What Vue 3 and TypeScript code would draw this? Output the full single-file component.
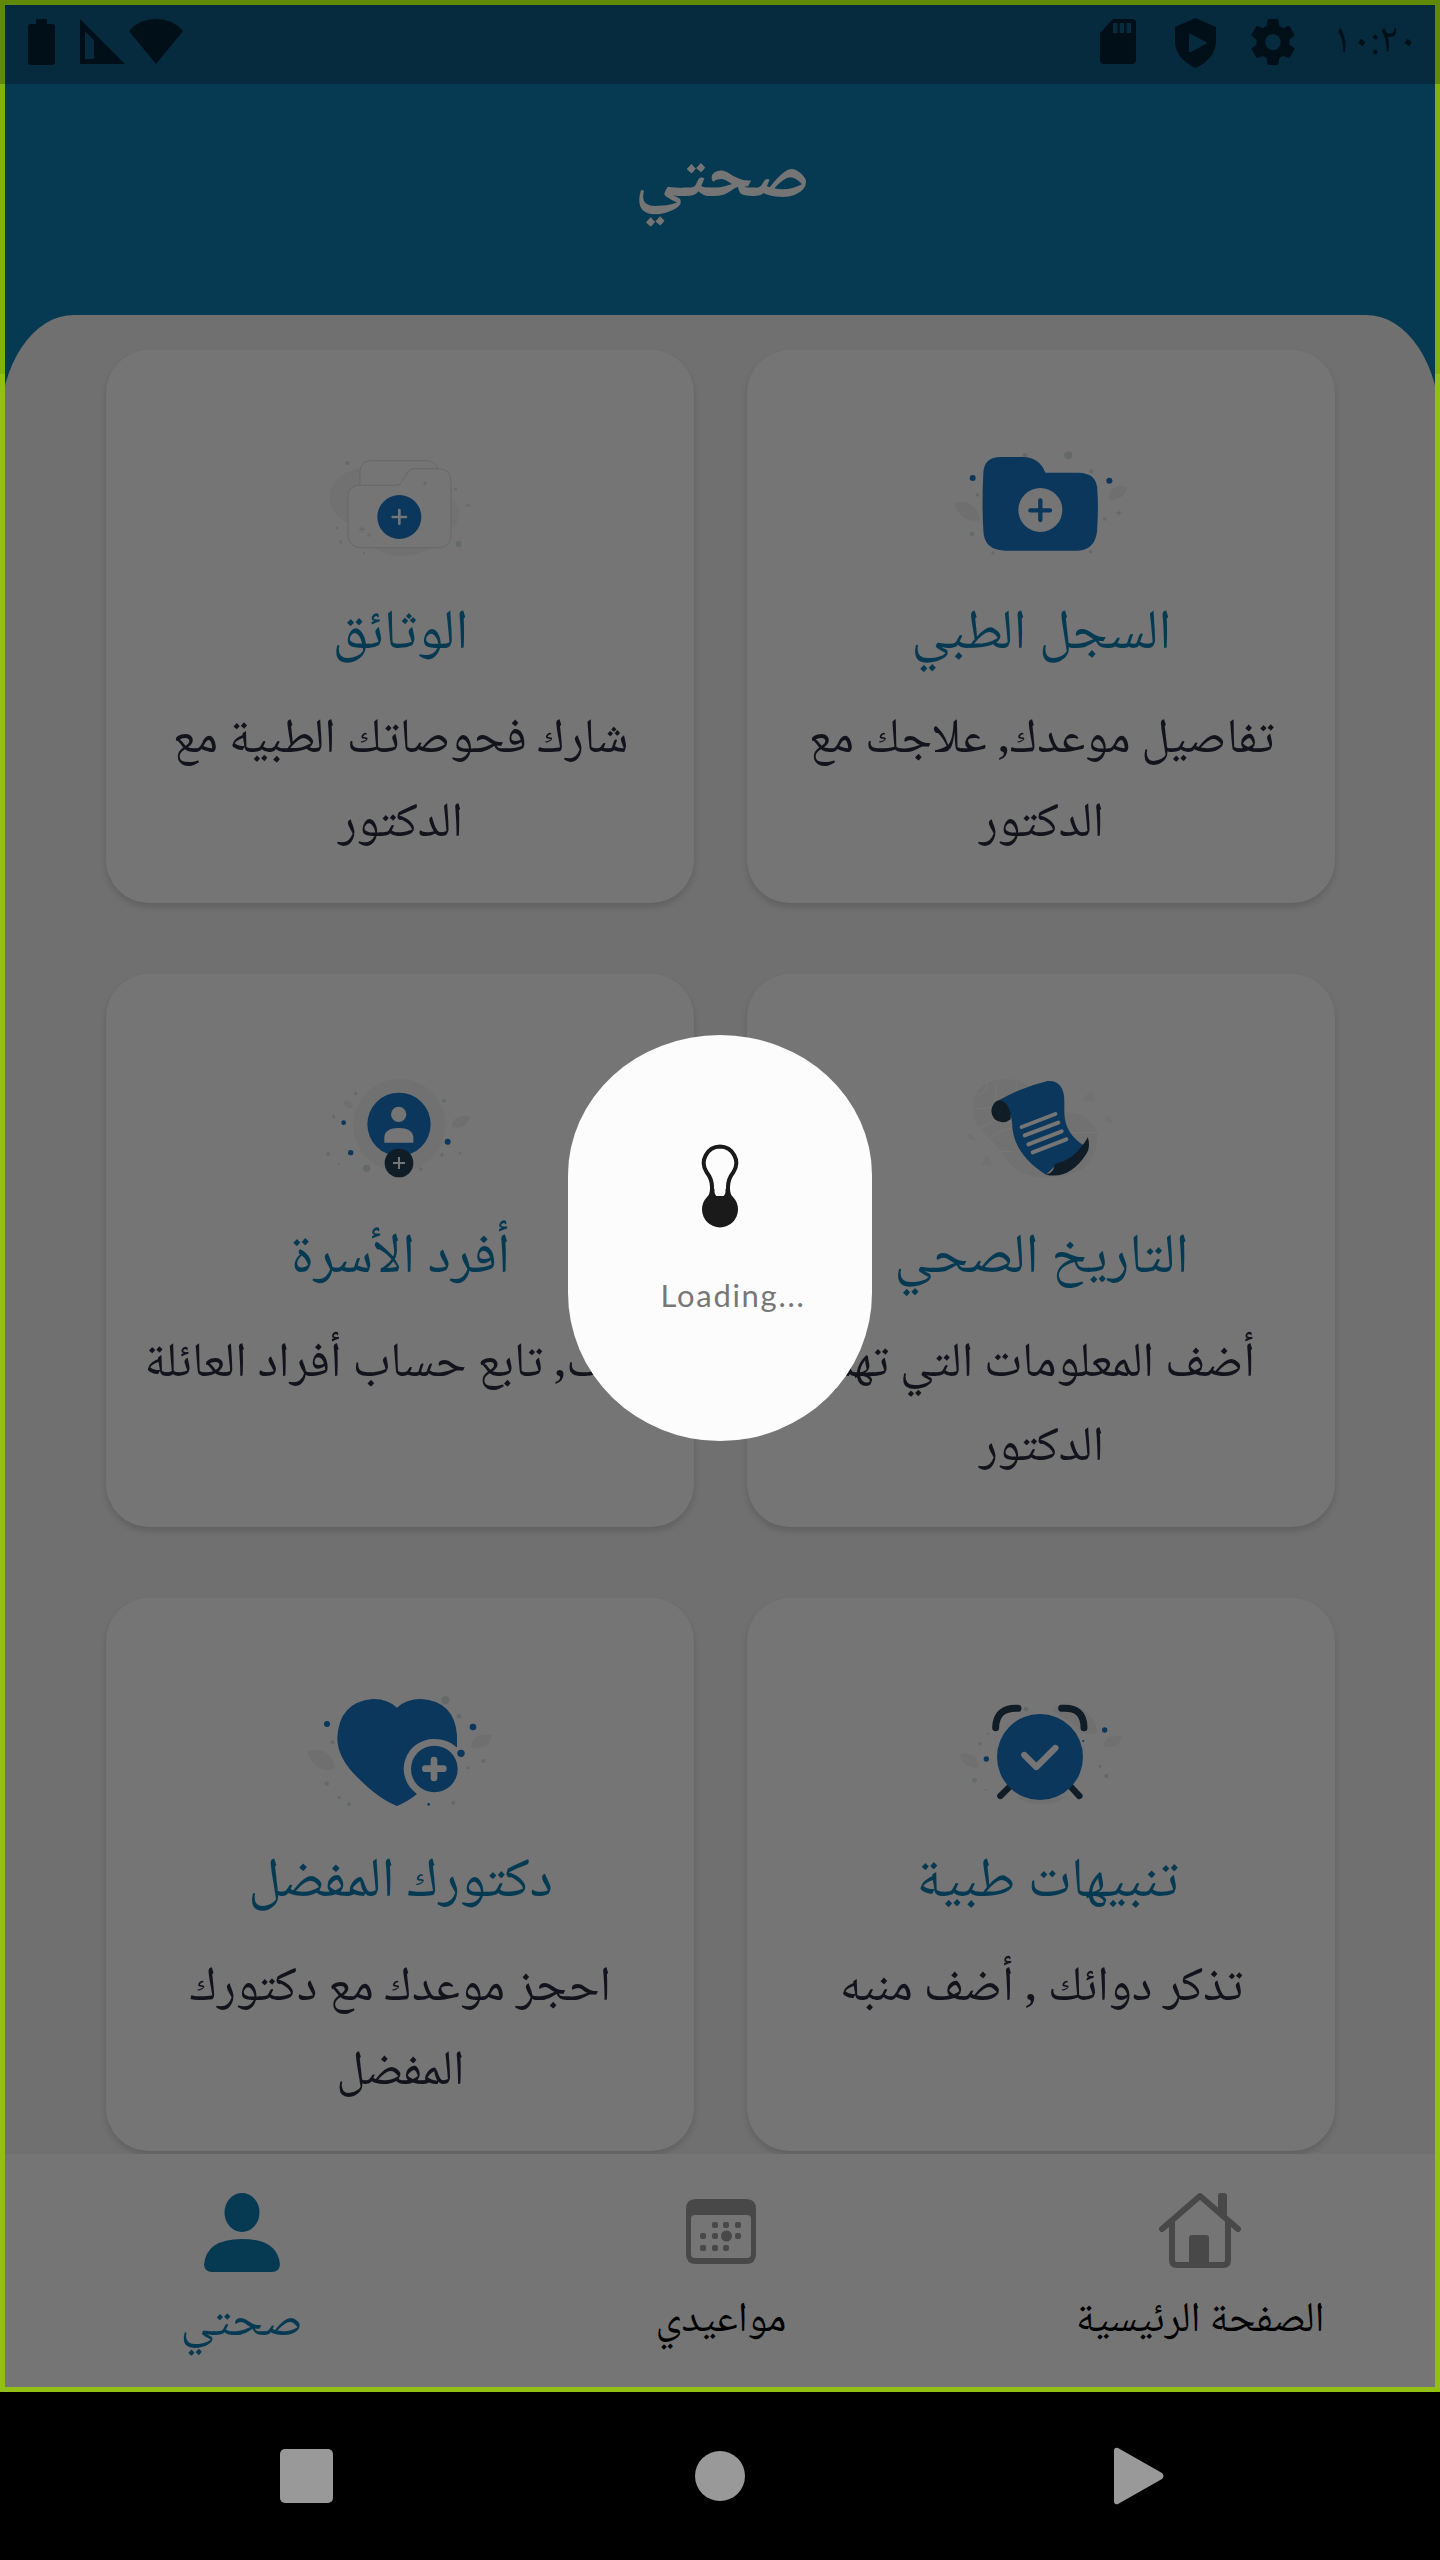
<script setup lang="ts">
type Dot = [number, number, number, string?]

interface Card {
  id: string
  title: string
  lines: string[]
  viewBox: string
  dots: Dot[]
}

const NAVY = '#0b375c'
const GREY = '#666969'

const cards: Card[] = [
  {
    id: 'record',
    title: 'السجل الطبي',
    lines: ['تفاصيل موعدك, علاجك مع', 'الدكتور'],
    viewBox: '5 0 600 480',
    dots: [[100, 174, 9, NAVY], [510, 182, 9, NAVY], [257, 106, 7], [387, 106, 12], [456, 154, 6], [115, 225, 5], [98, 342, 7], [161, 399, 5], [454, 395, 5], [496, 297, 5]],
  },
  {
    id: 'documents',
    title: 'الوثائق',
    lines: ['شارك فحوصاتك الطبية مع', 'الدكتور'],
    viewBox: '2 0 600 480',
    dots: [[144, 129, 6], [478, 372, 9], [112, 324, 4], [194, 399, 3], [469, 208, 4]],
  },
  {
    id: 'history',
    title: 'التاريخ الصحي',
    lines: ['أضف المعلومات التي تهم', 'الدكتور'],
    viewBox: '5 -18 600 480',
    dots: [],
  },
  {
    id: 'family',
    title: 'أفرد الأسرة',
    lines: ['أضف, تابع حساب أفراد العائلة'],
    viewBox: '2 -18 600 480',
    dots: [[133, 218, 7, NAVY], [154, 308, 8, NAVY], [445, 275, 9, NAVY], [87, 312, 6], [103, 200, 5], [169, 131, 5], [434, 152, 6], [481, 309, 4], [119, 342, 3]],
  },
  {
    id: 'reminders',
    title: 'تنبيهات طبية ',
    lines: ['تذكر دوائك , أضف منبه'],
    viewBox: '5 -6 600 480',
    dots: [[141, 267, 8, NAVY], [496, 180, 8, NAVY], [432, 213, 3, NAVY], [260, 117, 7], [122, 221, 5], [106, 331, 7], [147, 191, 3], [139, 361, 3], [482, 289, 5], [501, 318, 6]],
  },
  {
    id: 'favourite',
    title: 'دكتورك المفضل',
    lines: ['احجز موعدك مع دكتورك', 'المفضل'],
    viewBox: '32 -6 600 480',
    dots: [[113, 162, 9, NAVY], [551, 171, 10, NAVY], [468, 91, 12], [509, 139, 7], [129, 217, 6], [112, 341, 7], [150, 382, 5], [179, 403, 6], [535, 293, 5], [582, 273, 6]],
  },
]

const calendarDots: [number, number][] = [[29, 26], [40, 26], [52, 26], [17, 37], [29, 37], [52, 37], [17, 49], [29, 49], [40, 49]]
</script>

<template>
  <div class="device" dir="rtl">
    <div class="app">
      <header class="top">
        <div class="status">
          <span class="clock">١٠:٢٠</span>
          <svg class="gear" width="44" height="46" viewBox="2 2 20 20" preserveAspectRatio="none"><path d="M19.43 12.98c.04-.32.07-.64.07-.98s-.03-.66-.07-.98l2.11-1.65c.19-.15.24-.42.12-.64l-2-3.46c-.12-.22-.39-.3-.61-.22l-2.49 1c-.52-.4-1.08-.73-1.69-.98l-.38-2.65C14.46 2.18 14.25 2 14 2h-4c-.25 0-.46.18-.49.42l-.38 2.65c-.61.25-1.17.59-1.69.98l-2.49-1c-.23-.09-.49 0-.61.22l-2 3.46c-.13.22-.07.49.12.64l2.11 1.65c-.04.32-.07.65-.07.98s.03.66.07.98l-2.11 1.65c-.19.15-.24.42-.12.64l2 3.46c.12.22.39.3.61.22l2.49-1c.52.4 1.08.73 1.69.98l.38 2.65c.03.24.24.42.49.42h4c.25 0 .46-.18.49-.42l.38-2.65c.61-.25 1.17-.59 1.69-.98l2.49 1c.23.09.49 0 .61-.22l2-3.46c.12-.22.07-.49-.12-.64l-2.11-1.65zM12 15.5c-1.93 0-3.5-1.57-3.5-3.5s1.57-3.5 3.5-3.5 3.5 1.57 3.5 3.5-1.57 3.5-3.5 3.5z" /></svg>
          <svg class="shield" width="41" height="50" viewBox="0 0 41 50"><path fill-rule="evenodd" d="M20.5 0L41 9V24Q40 41 20.5 50Q1 41 0 24V9ZM14 17V33Q14 35 16 34L31 26Q33 25 31 24L16 16Q14 15 14 17Z" /></svg>
          <svg class="sd" width="36" height="45" viewBox="0 0 36 45"><path fill-rule="evenodd" d="M13 0H32Q36 0 36 4V41Q36 45 32 45H4Q0 45 0 41V14ZM13 4V14H17.5V4ZM19.7 4V14H24V4ZM26.5 4V14H31V4Z" /></svg>
          <i class="gap"></i>
          <svg class="wifi" width="54" height="45" viewBox="0 0 54 45"><path d="M0 12Q10 0 27 0T54 12L27 45Z" /></svg>
          <svg class="signal" width="45" height="45" viewBox="0 0 45 45"><path fill-rule="evenodd" d="M0 0L45 45H0ZM5 12V40H14V21Z" /></svg>
          <svg class="battery" width="27" height="46" viewBox="0 0 27 46"><path d="M8 0H19V5H24Q27 5 27 8V43Q27 46 24 46H3Q0 46 0 43V8Q0 5 3 5H8Z" /></svg>
        </div>
        <h1>صحتي</h1>
      </header>

      <main class="sheet">
        <div class="grid">
          <article v-for="card in cards" :key="card.id" class="card">
            <svg class="art" width="200" height="160" :viewBox="card.viewBox">
              <circle v-for="(d, i) in card.dots" :key="i" :cx="d[0]" :cy="d[1]" :r="d[2]" :fill="d[3] ?? GREY" />

              <g v-if="card.id === 'record'">
                <path d="M45 249Q105 237 121 290V301Q65 310 45 249ZM507 238Q512 187 564 202Q556 242 507 238Z" fill="#6f6f6f" />
                <path d="M538 266L540 275L548 278L540 281L538 291L536 281L529 278L536 275Z" fill="#686868" />
                <path d="M132 160Q133 111 185 111H250Q300 111 318 158H420Q474 160 474 212Q478 262 473 335Q466 392 410 392H200Q133 392 132 330Q127 250 132 160Z" fill="#0b375c" />
                <circle cx="303" cy="270" r="66" fill="#757575" />
                <path d="M303 241V300M273 271H332" stroke="#0b375c" stroke-width="13" stroke-linecap="round" />
              </g>

              <g v-else-if="card.id === 'documents'">
                <path d="M182 143Q91 166 91 235Q94 285 146 308V230Q147 197 182 197ZM455 234Q478 250 478 285Q476 312 455 330ZM220 383Q300 431 400 383Z" fill="#717171" />
                <g fill="none" stroke="#686868" stroke-width="3">
                  <path d="M182 196V153Q184 123 214 122H386Q408 124 416 146" />
                  <path d="M146 230Q147 197 180 196H290Q300 196 305 188L328 153Q333 146 342 146H418Q455 148 455 184V348Q452 382 418 383H184Q148 381 146 348Z" />
                  <path d="M188 319V337M179 328H197M210 339V351M204 345H216M506 250V262M500 256H512M124 360V372M119 366H129" />
                </g>
                <circle cx="377" cy="190" r="5" fill="#686868" />
                <circle cx="300" cy="291" r="66" fill="#0b375c" />
                <path d="M300 270V311M280 291H320" stroke="#757575" stroke-width="8" stroke-linecap="round" />
              </g>

              <g v-else-if="card.id === 'history'">
                <path d="M100 180Q102 88 200 87Q240 88 270 110L370 183Q470 195 474 260Q472 350 390 374Q250 405 195 320Q175 285 130 245Q100 215 100 180ZM430 153L451 122Q460 125 470 153ZM497 200Q516 194 521 219Q500 225 497 200ZM123 346L144 313L160 346ZM84 255Q103 247 107 270Q88 275 84 255Z" fill="#717171" />
                <path d="M115 135Q150 125 142 95M165 155Q175 130 167 95M101 178L155 172M118 235Q165 205 200 210M150 265Q180 240 215 235M175 305L222 305M390 248L472 248M230 95L234 120" fill="none" stroke="#787878" stroke-width="3" />
                <path d="M178 151Q250 110 325 93Q375 90 375 155V190Q377 250 430 284Q446 275 430 305Q400 330 350 345L320 374Q218 310 218 215Q210 165 178 151Z" fill="#0b375c" />
                <path d="M178 151Q202 150 214 190V208Q203 217 190 217Q157 213 156 182Q160 155 178 151ZM445 261Q455 290 441 312Q390 390 320 374Q344 370 346 343Q400 330 430 285Q442 270 445 261Z" fill="#101c26" />
                <path d="M247 231L348 192M256 256L357 218M267 283L367 244M280 307L381 268" stroke="#757575" stroke-width="12" stroke-linecap="round" />
              </g>

              <g v-else-if="card.id === 'family'">
                <circle cx="300" cy="225" r="138" fill="#717171" />
                <path d="M457 230Q462 190 511 200Q501 242 457 230ZM133 153Q158 147 160 173Q135 180 133 153Z" fill="#6f6f6f" />
                <path d="M428 306L430 312L435 314L430 317L428 323L426 317L421 314L426 312Z" fill="#666" />
                <circle cx="202" cy="355" r="11" fill="#666969" />
                <circle cx="364" cy="357" r="5" fill="#666969" />
                <circle cx="299" cy="223" r="95" fill="#0b375c" />
                <circle cx="298" cy="193" r="23" fill="#757575" />
                <path d="M255 278V260Q258 234 298 234T342 260V278Z" fill="#757575" />
                <circle cx="299" cy="339" r="43" fill="#101c26" />
                <path d="M299 321V357M281 339H317" stroke="#757575" stroke-width="6" />
              </g>

              <g v-else-if="card.id === 'reminders'">
                <path d="M60 252Q110 240 120 292Q75 300 60 252ZM492 228Q498 190 547 199Q540 240 492 228ZM338 122Q370 88 400 106Q470 130 474 191H440L400 160ZM230 380Q300 425 385 380Z" fill="#707070" />
                <path d="M169 173Q170 112 236 115M367 115Q434 110 434 173" fill="none" stroke="#101c26" stroke-width="21" stroke-linecap="round" />
                <path d="M214 347L183 378M391 347L420 378" stroke="#101c26" stroke-width="19" stroke-linecap="round" />
                <circle cx="302" cy="261" r="129" fill="#0b375c" />
                <path d="M255 255L291 291L348 234" fill="none" stroke="#757575" stroke-width="19" stroke-linecap="round" stroke-linejoin="round" />
              </g>

              <g v-else>
                <path d="M54 244Q125 225 137 297Q75 313 54 244ZM547 233Q545 188 609 195Q597 239 547 233Z" fill="#6f6f6f" />
                <path d="M323 113Q350 87 395 87Q495 93 503 195V250L382 373Q355 395 323 408Q270 388 207 325Q144 265 144 204Q148 97 250 87Q294 86 323 113Z" fill="#0b375c" />
                <path d="M500 230Q475 207 435 207A90 90 0 0 0 382 371L435 400H520V240Z" fill="#757575" />
                <circle cx="515" cy="250" r="11" fill="#0b375c" />
                <circle cx="492" cy="398" r="6" fill="#666969" />
                <circle cx="418" cy="403" r="4" fill="#0b375c" />
                <circle cx="435" cy="297" r="70" fill="#0b375c" />
                <path d="M434 270V324M408 296H462" stroke="#757575" stroke-width="20" stroke-linecap="round" />
              </g>
            </svg>
            <h2>{{ card.title }}</h2>
            <p v-for="line in card.lines" :key="line">{{ line }}</p>
          </article>
        </div>
      </main>

      <nav class="tabs">
        <a class="tab">
          <svg width="84" height="80" viewBox="0 0 84 80">
            <path fill="none" stroke="#484848" stroke-width="6" stroke-linecap="round" stroke-linejoin="round" d="M4 37L42 4L80 37" />
            <path fill="none" stroke="#484848" stroke-width="6" d="M14 30V68Q14 73 19 73H65Q70 73 70 68V30" />
            <path fill="#484848" d="M31 46Q31 43 34 43H48Q51 43 51 46V71H31ZM60 4Q60 1 63 1H66Q69 1 69 4V28L60 20Z" />
          </svg>
          <span class="label">الصفحة الرئيسية</span>
        </a>
        <a class="tab">
          <svg width="70" height="80" viewBox="0 0 70 80">
            <path fill="#484848" fill-rule="evenodd" d="M10 7H60Q70 7 70 17V62Q70 72 60 72H10Q0 72 0 62V17Q0 7 10 7ZM9 23Q5 23 5 27V62Q5 66 9 66H61Q65 66 65 62V27Q65 23 61 23Z" />
            <rect v-for="([x, y], i) in calendarDots" :key="i" :x="x - 3" :y="y + 4" width="6" height="6" rx="2" fill="#484848" />
            <circle cx="40.5" cy="44" r="5.5" fill="#484848" />
          </svg>
          <span class="label">مواعيدي</span>
        </a>
        <a class="tab active">
          <svg width="76" height="80" viewBox="0 0 76 80">
            <ellipse cx="38" cy="20.5" rx="17.5" ry="19.5" fill="#063a52" />
            <path fill="#063a52" d="M0 73Q2 47 38 47T76 73Q75 80 68 80H8Q1 80 0 73Z" />
          </svg>
          <span class="label">صحتي</span>
        </a>
      </nav>

      <div class="frame"></div>
      <div class="frame-header"></div>
      <div class="frame-top"></div>

      <div class="modal" dir="ltr">
        <svg width="38" height="84" viewBox="0 0 38 84">
          <path d="M19 2.5A16.5 16.5 0 0 0 5.5 28Q11 35 11 43V54H27V43Q27 35 32.5 28A16.5 16.5 0 0 0 19 2.5Z" fill="#fcfcfc" stroke="#1a1a1a" stroke-width="4" />
          <path d="M9 45H13.5V48Q14 53 19 53T24.5 48V45H29Q29 50 32 53A18 18 0 1 1 6 53Q9 50 9 45Z" fill="#1a1a1a" />
        </svg>
        <span class="loading">Loading...</span>
      </div>
    </div>

    <footer class="system">
      <svg width="50" height="58" viewBox="0 0 50 58"><path d="M4 1L48 26Q51 29 48 32L4 57Q0 58 0 54V4Q0 0 4 1Z" /></svg>
      <svg width="50" height="58" viewBox="0 0 50 58"><circle cx="25" cy="29" r="25" /></svg>
      <svg width="53" height="58" viewBox="0 0 53 58"><rect y="2" width="53" height="54" rx="5" /></svg>
    </footer>
  </div>
</template>

<style>
body {
  margin: 0;
  background: #000;
}
</style>

<style scoped>
.device {
  width: 1440px;
  height: 2560px;
  overflow: hidden;
  background: #000;
  font-family: "Noto Naskh Arabic", "DejaVu Sans", sans-serif;
}

.app {
  position: relative;
  display: flex;
  flex-direction: column;
  height: 2392px;
  background: #063a52;
}

.top {
  height: 315px;
}

.status {
  display: flex;
  align-items: flex-start;
  box-sizing: border-box;
  height: 84px;
  padding: 19px 30px 0 28px;
  background: #062b3e;
  fill: #010f18;
  color: #010f18;
}

.clock {
  display: flex;
  justify-content: center;
  width: 70px;
  margin-left: 45px;
  font-size: 42px;
  line-height: 48px;
  white-space: nowrap;
}

.gear {
  margin-left: 35px;
}

.shield {
  margin: -1px 0 0 39px;
}

.gap {
  flex: 1;
}

.wifi {
  margin-left: 4px;
}

.signal {
  margin-left: 25px;
}

h1 {
  margin: 48px 0 0;
  padding-left: 4px;
  text-align: center;
  font-size: 70px;
  font-weight: 700;
  line-height: 100px;
  color: #757575;
}

.sheet {
  flex: 1;
  overflow: hidden;
  padding: 35px 0 0 1px;
  border-radius: 74px 74px 0 0 / 110px 110px 0 0;
  background: #707070;
}

.grid {
  display: grid;
  grid-template-columns: 588px 588px;
  grid-auto-rows: 553px;
  justify-content: center;
  gap: 71px 53px;
}

.card {
  display: flex;
  flex-direction: column;
  align-items: center;
  border-radius: 43px;
  background: #757575;
  box-shadow: 0 4px 6px rgba(0, 0, 0, 0.14);
  white-space: pre;
}

.art {
  flex: none;
  margin-top: 70px;
}

h2 {
  margin: 16px 0 24px;
  padding-left: 1px;
  font-size: 56px;
  font-weight: 400;
  line-height: 80px;
  color: #063a52;
}

p {
  margin: 0;
  padding-left: 1px;
  font-size: 49px;
  line-height: 84px;
  color: #12131c;
}

.tabs {
  display: grid;
  grid-template-columns: 1fr 1fr 1fr;
  box-sizing: border-box;
  height: 238px;
  padding: 38px 0 0 2px;
  background: #757575;
}

.tab {
  display: flex;
  flex-direction: column;
  align-items: center;
}

.label {
  margin-top: 20px;
  font-size: 42px;
  line-height: 60px;
  color: #000;
}

.active .label {
  margin-top: 23px;
  font-size: 49px;
  color: #063a52;
}

.frame {
  position: absolute;
  inset: 0;
  border: 5px solid #92bf13;
}

.frame-header {
  position: absolute;
  inset: 84px 0 auto;
  height: 290px;
  border: solid #80b10c;
  border-width: 0 5px;
}

.frame-top {
  position: absolute;
  inset: 0 0 auto;
  height: 79px;
  border: solid #608908;
  border-width: 5px 5px 0;
}

.modal {
  position: absolute;
  top: 1035px;
  left: 568px;
  display: flex;
  flex-direction: column;
  align-items: center;
  box-sizing: border-box;
  width: 304px;
  height: 406px;
  padding-top: 109px;
  border-radius: 152px / 140px 140px 148px 148px;
  background: #fcfcfc;
}

.loading {
  margin: 47px 0 0 26px;
  font-family: Lato, sans-serif;
  font-size: 31px;
  letter-spacing: 1.7px;
  line-height: 40px;
  color: #777;
}

.system {
  display: flex;
  justify-content: space-between;
  align-items: center;
  box-sizing: border-box;
  height: 168px;
  padding: 0 276px 0 280px;
  fill: #999;
}

.system svg:nth-child(2) {
  margin-right: 7px;
}
</style>
